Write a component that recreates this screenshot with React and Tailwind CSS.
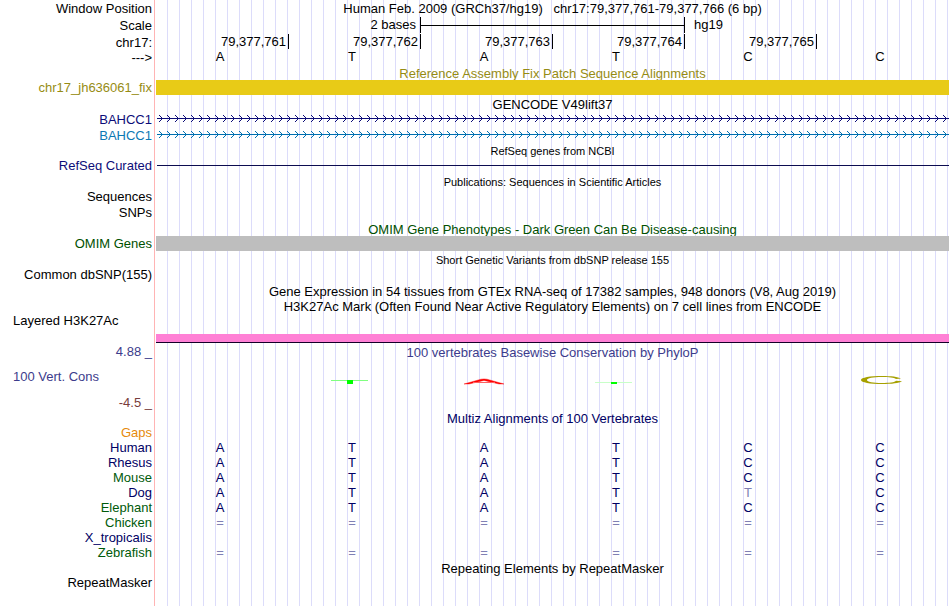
import React from "react";

const BASES = ["A", "T", "A", "T", "C", "C"];
const POSITIONS = ["79,377,761", "79,377,762", "79,377,763", "79,377,764", "79,377,765"];

const SPECIES = [
  { name: "Human", color: "text-[#000064]", bases: "ATATCC" },
  { name: "Rhesus", color: "text-[#000064]", bases: "ATATCC" },
  { name: "Mouse", color: "text-[#005a0a]", bases: "ATATCC" },
  { name: "Dog", color: "text-[#000064]", bases: "ATATTC", diff: 4 },
  { name: "Elephant", color: "text-[#005a0a]", bases: "ATATCC" },
  { name: "Chicken", color: "text-[#005a0a]", bases: "======" },
  { name: "X_tropicalis", color: "text-[#000064]", bases: "      " },
  { name: "Zebrafish", color: "text-[#005a0a]", bases: "======" },
];

const Label = ({ as: Tag = "div", children, className = "text-black", align = "justify-end pr-[2px]" }) => (
  <Tag className="w-[156px] shrink-0 bg-white font-normal">
    <div className={`flex h-full w-[155px] items-center border-r border-[#ffb4b4] whitespace-pre ${align} ${className}`}>
      {children}
    </div>
  </Tag>
);

const Row = ({ label, color, align, height = "h-[15px]", children }) => (
  <div className={`flex ${height}`}>
    <Label className={color} align={align}>
      {label}
    </Label>
    <div className="flex min-w-0 flex-1 items-center">{children}</div>
  </div>
);

// clip cuts the descenders where a solid bar follows
const Title = ({ children, label, labelColor, labelAlign, clip, color = "text-black", size = "text-[13px]", height = "h-[16px]" }) => (
  <div className={`flex ${clip ? "overflow-hidden" : ""} ${height}`}>
    <Label className={labelColor} align={labelAlign}>
      {label}
    </Label>
    <h2 className={`flex-1 self-end text-center leading-[13px] whitespace-pre ${size} ${color}`}>{children}</h2>
  </div>
);

// intron line with strand arrows every 8px
const GeneLine = ({ id, color }) => (
  <svg className="ml-px h-[16px] w-full" shapeRendering="crispEdges">
    <defs>
      <pattern id={id} width="8" height="16" patternUnits="userSpaceOnUse">
        <path
          d="M2 4h1v1h-1zM3 5h1v1h-1zM4 6h1v1h-1zM5 7h1v1h-1zM4 8h1v1h-1zM3 9h1v1h-1zM2 10h1v1h-1z"
          fill={color}
        />
      </pattern>
    </defs>
    <rect width="100%" height="16" fill={`url(#${id})`} />
    <rect y="7" width="100%" height="1" fill={color} />
  </svg>
);

const ConservationLogo = () => (
  <div className="ml-px grid h-full w-full grid-cols-6">
    <span />
    <svg className="h-[35px] w-[132px]" viewBox="0 0 132 35" shapeRendering="crispEdges">
      <rect x="42" y="21" width="37" height="1" fill="#80ff80" />
      <rect x="58" y="21" width="6" height="4" fill="#00ff00" />
    </svg>
    <svg className="h-[35px] w-[132px]" viewBox="0 0 132 35">
      <path d="M43 25L60 20.2Q63 19.6 66 20.2L83 25H78L63 21.4L48 25Z" fill="#ff0000" stroke="#ff0000" strokeWidth=".4" />
      <path d="M52 23.5H74" stroke="#ff6060" />
    </svg>
    <svg className="h-[35px] w-[132px]" viewBox="0 0 132 35" shapeRendering="crispEdges">
      <rect x="42" y="23" width="37" height="1" fill="#c8ffc8" />
      <rect x="58" y="23" width="6" height="2" fill="#00ff00" />
    </svg>
    <span />
    <svg className="h-[35px] w-[132px]" viewBox="0 0 132 35">
      <path
        d="M84 19.6C81 17.8 74 17 65 17C53 17 44 18.5 44 21C44 23.5 53 25 65 25C75 25 82 24.3 85 22.3L79 21.8C78 23.4 72 24 65 24C56 24 50 23 50 21C50 19 56 18 65 18C72 18 77 18.5 79 20Z"
        fill="#a6a000"
      />
    </svg>
  </div>
);

const App = () => {
  return (
    <main className="flex min-h-screen flex-col bg-white bg-[repeating-linear-gradient(to_right,transparent_0px,transparent_11px,#dcdcfa_11px,#dcdcfa_12px)] pr-px font-['Liberation_Sans',Arial,sans-serif] text-[13px] leading-[15px] text-black">
      <Row label="Window Position" height="h-[16px]">
        <h1 className="w-full text-center whitespace-pre">
          {"Human Feb. 2009 (GRCh37/hg19)   chr17:79,377,761-79,377,766 (6 bp)"}
        </h1>
      </Row>
      <Row label="Scale" height="h-[18px]">
        <div className="ml-px grid h-[16px] w-full grid-cols-3">
          <span className="border-r border-black pr-1 text-right">2 bases</span>
          <span className="flex items-center border-r border-black">
            <span className="h-px w-full bg-black" />
          </span>
          <span className="pl-[9px]">hg19</span>
        </div>
      </Row>
      <Row label="chr17:" height="h-[16px]">
        <div className="ml-px grid h-full w-full grid-cols-6">
          {POSITIONS.map((pos) => (
            <span key={pos} className="h-[15px] border-r border-black pr-[2px] text-right leading-[16px]">
              {pos}
            </span>
          ))}
        </div>
      </Row>
      <Row label="--->" height="h-[14px]">
        <div className="ml-px grid w-full grid-cols-6">
          {BASES.map((base, i) => (
            <span key={i} className="pr-[6px] text-center leading-[14px]">
              {base}
            </span>
          ))}
        </div>
      </Row>

      <Title color="text-[#968c14]" clip>
        Reference Assembly Fix Patch Sequence Alignments
      </Title>
      <Row label="chr17_jh636061_fix" color="text-[#968c14]">
        <div className="h-full w-full bg-[#e8cb17]" />
      </Row>

      <Title>GENCODE V49lift37</Title>
      <Row label="BAHCC1" color="text-[#0c0c78]" height="h-[16px]">
        <GeneLine id="arrows-coding" color="#0c0c78" />
      </Row>
      <Row label="BAHCC1" color="text-[#0c78b4]" height="h-[16px]">
        <GeneLine id="arrows-noncoding" color="#0070b0" />
      </Row>

      <Title size="text-[11px]" height="h-[15px]">
        RefSeq genes from NCBI
      </Title>
      <Row label="RefSeq Curated" color="text-[#0c0c78]">
        <div className="ml-px h-px w-full bg-[#0c0c50]" />
      </Row>

      <Title size="text-[11px]">Publications: Sequences in Scientific Articles</Title>
      <Row label="Sequences" />
      <Row label="SNPs" height="h-[17px]" />

      <Title color="text-[#005000]" height="h-[15px]" clip>
        OMIM Gene Phenotypes - Dark Green Can Be Disease-causing
      </Title>
      <Row label="OMIM Genes" color="text-[#005000]">
        <div className="h-full w-full bg-[#bebebe]" />
      </Row>

      <Title size="text-[11px]">Short Genetic Variants from dbSNP release 155</Title>
      <Row label="Common dbSNP(155)" />

      <Title>Gene Expression in 54 tissues from GTEx RNA-seq of 17382 samples, 948 donors (V8, Aug 2019)</Title>
      <Title height="h-[15px]">
        H3K27Ac Mark (Often Found Near Active Regulatory Elements) on 7 cell lines from ENCODE
      </Title>
      <Row label="Layered H3K27Ac" align="pl-[13px] pb-[15px]" height="h-[30px]">
        <div className="h-[9px] w-full self-end border-b border-[#140028] bg-[#ff80d5]" />
      </Row>

      <Title label="4.88 _" labelColor="text-[#3c3c8c]" labelAlign="justify-end pr-[2px]" color="text-[#3c3c8c]">
        100 vertebrates Basewise Conservation by PhyloP
      </Title>
      <Row label="100 Vert. Cons" color="text-[#3c3c8c]" align="pl-[13px]" height="h-[35px]">
        <ConservationLogo />
      </Row>
      <Row label="-4.5 _" color="text-[#783c3c]" height="h-[16px]" />

      <Title color="text-[#000064]" height="h-[15px]">
        Multiz Alignments of 100 Vertebrates
      </Title>
      <Row label="Gaps" color="text-[#e68a0a]" />
      <table className="block">
        <tbody className="block">
          {SPECIES.map(({ name, color, bases, diff }) => (
            <tr key={name} className="flex h-[15px]">
              <Label as="th" className={color}>
                {name}
              </Label>
              {bases.split("").map((base, i) => (
                <td
                  key={i}
                  className={`flex-1 pr-[6px] text-center first-of-type:ml-px ${
                    base === "=" || diff === i ? "text-[#8080b4]" : "text-[#000064]"
                  }`}
                >
                  {base}
                </td>
              ))}
            </tr>
          ))}
        </tbody>
      </table>

      <Title height="h-[15px]">Repeating Elements by RepeatMasker</Title>
      <Row label="RepeatMasker" />
      <Row height="flex-1" />
    </main>
  );
};

export default App;
